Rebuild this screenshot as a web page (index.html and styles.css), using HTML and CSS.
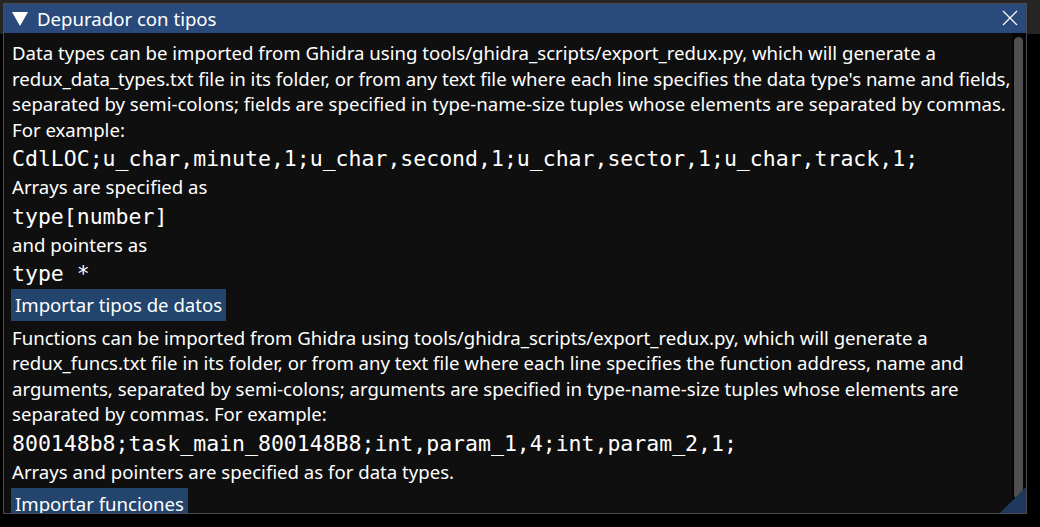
FILE: index.html
```html
<!DOCTYPE html>
<html>
<head>
<meta charset="utf-8">
<link rel="stylesheet" href="styles.css">
</head>
<body>
<div class="menubar"></div>
<div class="window">
  <div class="titlebar">
    <svg class="arrow" width="16" height="14" viewBox="0 0 16 14"><polygon points="0,0 16,0 8,14" fill="#ffffff"/></svg>
    <span class="title">Depurador con tipos</span>
    <svg class="close" width="16" height="16" viewBox="0 0 16 16"><path d="M1 1 L15 15 M15 1 L1 15" stroke="#ffffff" stroke-width="1.2" fill="none"/></svg>
  </div>
  <div class="body">
    <div class="content">
      <p class="txt">Data types can be imported from Ghidra using tools/ghidra_scripts/export_redux.py, which will generate a<br>redux_data_types.txt file in its folder, or from any text file where each line specifies the data type's name and fields,<br>separated by semi-colons; fields are specified in type-name-size tuples whose elements are separated by commas.<br>For example:</p>
      <p class="mono">CdlLOC;u_char,minute,1;u_char,second,1;u_char,sector,1;u_char,track,1;</p>
      <p class="txt">Arrays are specified as</p>
      <p class="mono">type[number]</p>
      <p class="txt">and pointers as</p>
      <p class="mono">type *</p>
      <div class="row"><span class="btn">Importar tipos de datos</span></div>
      <p class="txt">Functions can be imported from Ghidra using tools/ghidra_scripts/export_redux.py, which will generate a<br>redux_funcs.txt file in its folder, or from any text file where each line specifies the function address, name and<br>arguments, separated by semi-colons; arguments are specified in type-name-size tuples whose elements are<br>separated by commas. For example:</p>
      <p class="mono">800148b8;task_main_800148B8;int,param_1,4;int,param_2,1;</p>
      <p class="txt">Arrays and pointers are specified as for data types.</p>
      <div class="row"><span class="btn">Importar funciones</span></div>
    </div>
    <div class="scrollbar"><div class="grab"></div></div>
    <div class="grip"></div>
  </div>
</div>
</body>
</html>
```

FILE: styles.css
```css
html, body {
  margin: 0;
  padding: 0;
  background: #000000;
  width: 1040px;
  height: 527px;
  overflow: hidden;
  position: relative;
}
.menubar {
  height: 34px;
  background: #252525;
}
.window {
  position: absolute;
  left: 3px;
  top: 3px;
  width: 1024px;
  height: 511px;
  box-sizing: border-box;
  border: 1px solid #4a4a55;
  background: #0f0f0f;
  display: flex;
  flex-direction: column;
  overflow: hidden;
  font-family: "Noto Sans", sans-serif;
  color: #ffffff;
}
.titlebar {
  height: 29px;
  flex: none;
  background: #294a7a;
  display: flex;
  align-items: center;
  position: relative;
}
.arrow {
  margin-left: 8px;
  margin-top: 1px;
}
.title {
  margin-left: 9px;
  font-size: 18.6px;
  line-height: 25px;
}
.close {
  position: absolute;
  right: 8px;
  top: 6px;
}
.body {
  flex: 1;
  position: relative;
  overflow: hidden;
}
.content {
  padding: 7px 0 0 8px;
  display: flex;
  flex-direction: column;
  gap: 4px;
}
.txt {
  margin: 0;
  font-size: 18.6px;
  line-height: 25.5px;
  white-space: nowrap;
}
.mono {
  margin: 0;
  padding-top: 1px;
  font-family: "DejaVu Sans Mono", monospace;
  font-size: 21.5px;
  line-height: 23px;
  white-space: pre;
}
.row {
  display: flex;
}
.btn {
  background: #23456d;
  padding: 3px 4px 3px 4px;
  margin-left: -1px;
  font-size: 18.6px;
  line-height: 25.5px;
  white-space: nowrap;
}
.scrollbar {
  position: absolute;
  right: 0;
  top: 0;
  bottom: 0;
  width: 14px;
  background: #060606;
}
.grab {
  position: absolute;
  left: 2px;
  width: 9px;
  top: 4px;
  height: 462px;
  border-radius: 5px;
  background: #4f4f4f;
}
.grip {
  position: absolute;
  right: 0;
  bottom: 0;
  width: 26px;
  height: 26px;
  background: #1f395c;
  clip-path: polygon(100% 0, 100% 100%, 0 100%);
}
```
